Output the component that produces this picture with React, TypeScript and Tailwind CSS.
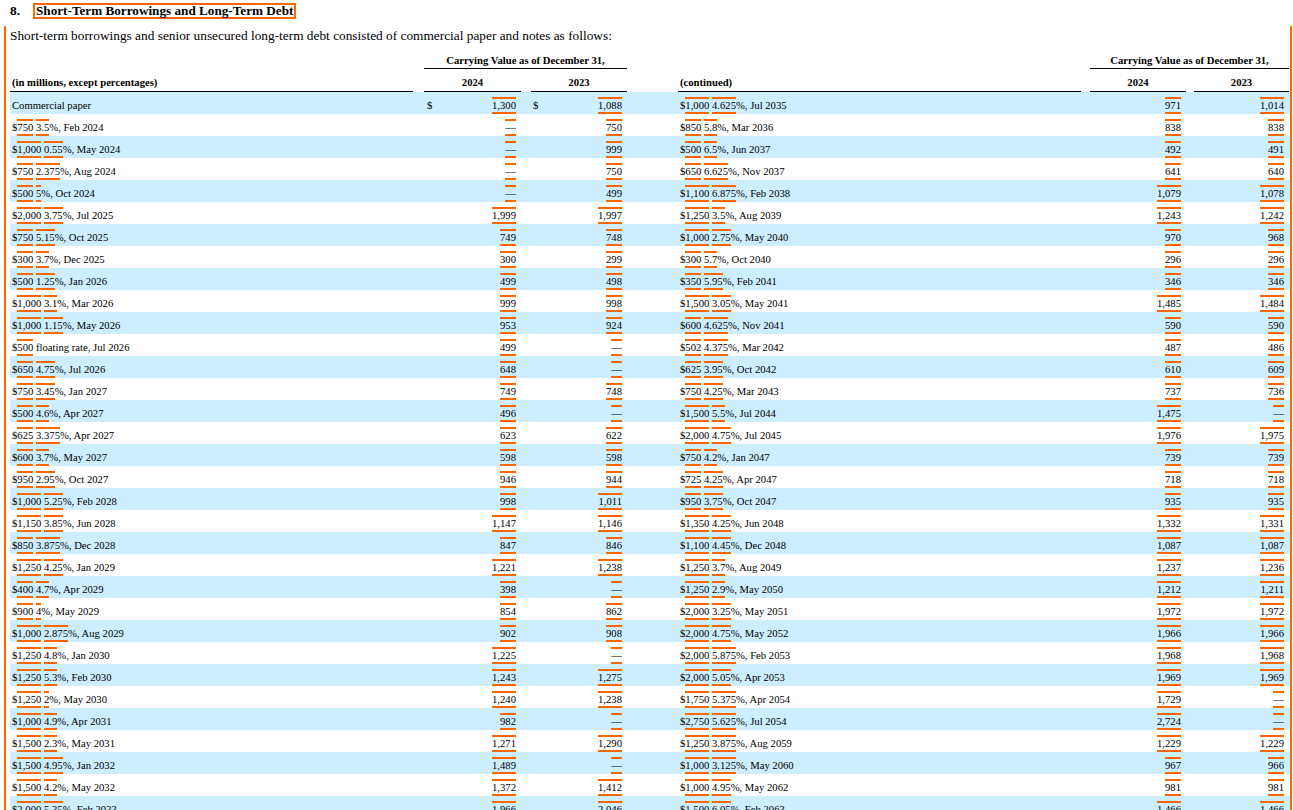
import React from "react";

const COLS =
  "grid grid-cols-[403px_11px_97px_10px_96px_51px_403px_9px_96px_8px_95px]";

const left: [string, string, string][] = [
  ["750|3.5|%, Feb 2024", "", "750"],
  ["1,000|0.55|%, May 2024", "", "999"],
  ["750|2.375|%, Aug 2024", "", "750"],
  ["500|5|%, Oct 2024", "", "499"],
  ["2,000|3.75|%, Jul 2025", "1,999", "1,997"],
  ["750|5.15|%, Oct 2025", "749", "748"],
  ["300|3.7|%, Dec 2025", "300", "299"],
  ["500|1.25|%, Jan 2026", "499", "498"],
  ["1,000|3.1|%, Mar 2026", "999", "998"],
  ["1,000|1.15|%, May 2026", "953", "924"],
  ["500||floating rate, Jul 2026", "499", ""],
  ["650|4.75|%, Jul 2026", "648", ""],
  ["750|3.45|%, Jan 2027", "749", "748"],
  ["500|4.6|%, Apr 2027", "496", ""],
  ["625|3.375|%, Apr 2027", "623", "622"],
  ["600|3.7|%, May 2027", "598", "598"],
  ["950|2.95|%, Oct 2027", "946", "944"],
  ["1,000|5.25|%, Feb 2028", "998", "1,011"],
  ["1,150|3.85|%, Jun 2028", "1,147", "1,146"],
  ["850|3.875|%, Dec 2028", "847", "846"],
  ["1,250|4.25|%, Jan 2029", "1,221", "1,238"],
  ["400|4.7|%, Apr 2029", "398", ""],
  ["900|4|%, May 2029", "854", "862"],
  ["1,000|2.875|%, Aug 2029", "902", "908"],
  ["1,250|4.8|%, Jan 2030", "1,225", ""],
  ["1,250|5.3|%, Feb 2030", "1,243", "1,275"],
  ["1,250|2|%, May 2030", "1,240", "1,238"],
  ["1,000|4.9|%, Apr 2031", "982", ""],
  ["1,500|2.3|%, May 2031", "1,271", "1,290"],
  ["1,500|4.95|%, Jan 2032", "1,489", ""],
  ["1,500|4.2|%, May 2032", "1,372", "1,412"],
  ["2,000|5.35|%, Feb 2033", "1,966", "2,046"],
];

const right: [string, string, string][] = [
  ["1,000|4.625|%, Jul 2035", "971", "1,014"],
  ["850|5.8|%, Mar 2036", "838", "838"],
  ["500|6.5|%, Jun 2037", "492", "491"],
  ["650|6.625|%, Nov 2037", "641", "640"],
  ["1,100|6.875|%, Feb 2038", "1,079", "1,078"],
  ["1,250|3.5|%, Aug 2039", "1,243", "1,242"],
  ["1,000|2.75|%, May 2040", "970", "968"],
  ["300|5.7|%, Oct 2040", "296", "296"],
  ["350|5.95|%, Feb 2041", "346", "346"],
  ["1,500|3.05|%, May 2041", "1,485", "1,484"],
  ["600|4.625|%, Nov 2041", "590", "590"],
  ["502|4.375|%, Mar 2042", "487", "486"],
  ["625|3.95|%, Oct 2042", "610", "609"],
  ["750|4.25|%, Mar 2043", "737", "736"],
  ["1,500|5.5|%, Jul 2044", "1,475", ""],
  ["2,000|4.75|%, Jul 2045", "1,976", "1,975"],
  ["750|4.2|%, Jan 2047", "739", "739"],
  ["725|4.25|%, Apr 2047", "718", "718"],
  ["950|3.75|%, Oct 2047", "935", "935"],
  ["1,350|4.25|%, Jun 2048", "1,332", "1,331"],
  ["1,100|4.45|%, Dec 2048", "1,087", "1,087"],
  ["1,250|3.7|%, Aug 2049", "1,237", "1,236"],
  ["1,250|2.9|%, May 2050", "1,212", "1,211"],
  ["2,000|3.25|%, May 2051", "1,972", "1,972"],
  ["2,000|4.75|%, May 2052", "1,966", "1,966"],
  ["2,000|5.875|%, Feb 2053", "1,968", "1,968"],
  ["2,000|5.05|%, Apr 2053", "1,969", "1,969"],
  ["1,750|5.375|%, Apr 2054", "1,729", ""],
  ["2,750|5.625|%, Jul 2054", "2,724", ""],
  ["1,250|3.875|%, Aug 2059", "1,229", "1,229"],
  ["1,000|3.125|%, May 2060", "967", "966"],
  ["1,000|4.95|%, May 2062", "981", "981"],
  ["1,500|6.05|%, Feb 2063", "1,466", "1,466"],
];

function Tag({ children }: { children: React.ReactNode }) {
  return (
    <span className="border-y-2 border-[#ff6600] pb-[1px]">{children}</span>
  );
}

function Label({ spec }: { spec: string }) {
  const [amt, rate, rest] = spec.split("|");
  return (
    <div className="pl-[2px] pt-[4px] leading-[18px] whitespace-nowrap">
      $<Tag>{amt}</Tag>{" "}
      {rate ? (
        <>
          <Tag>{rate}</Tag>
          {rest}
        </>
      ) : (
        rest
      )}
    </div>
  );
}

function Val({ v, dollar, pl }: { v: string; dollar?: boolean; pl?: string }) {
  return (
    <div
      className={`flex justify-between pr-[5px] pt-[4px] leading-[18px] ${
        pl ?? "pl-[3px]"
      }`}
    >
      <div>{dollar ? "$" : ""}</div>
      <div>
        <Tag>{v === "" ? "—" : v}</Tag>
      </div>
    </div>
  );
}

export default function App() {
  const rows = right.map((r, i) => ({ l: i === 0 ? null : left[i - 1], r }));
  return (
    <div className="w-[1293px] h-[810px] overflow-hidden bg-white text-black font-['Liberation_Serif',serif]">
      {/* Heading */}
      <div className="h-[26px] pl-[10px] pt-[3px] flex items-start">
        <div className="w-[23px] text-[13.3px] font-bold leading-[16px]">8.</div>
        <div className="h-[16px] border-2 border-[#ff6600] px-[1px] text-[13.2px] font-bold leading-[12px] whitespace-nowrap">
          Short-Term Borrowings and Long-Term Debt
        </div>
      </div>

      {/* Text block */}
      <div className="ml-[4px] w-[1288px] border-x-2 border-[#ff6600] pl-[4px] pt-[2px] pb-[40px]">
        <p className="text-[13.33px] leading-[16px] whitespace-nowrap">
          Short-term borrowings and senior unsecured long-term debt consisted of
          commercial paper and notes as follows:
        </p>

        <div className="text-[10.67px]">
          {/* Header row A */}
          <div className={`${COLS} h-[25px] font-bold`}>
            <div className="col-start-3 col-span-3 self-end border-b border-black text-center leading-[16px] whitespace-nowrap">
              Carrying Value as of December 31,
            </div>
            <div className="col-start-9 col-span-3 self-end border-b border-black text-center leading-[16px] whitespace-nowrap">
              Carrying Value as of December 31,
            </div>
          </div>
          {/* Header row B */}
          <div className={`${COLS} h-[23px] font-bold`}>
            <div className="border-b border-black pl-[2px] pt-[4px] leading-[18px] whitespace-nowrap">
              (in millions, except percentages)
            </div>
            <div />
            <div className="border-b border-black text-center pt-[4px] leading-[18px]">
              2024
            </div>
            <div />
            <div className="border-b border-black text-center pt-[4px] leading-[18px]">
              2023
            </div>
            <div />
            <div className="border-b border-black pl-[2px] pt-[4px] leading-[18px]">
              (continued)
            </div>
            <div />
            <div className="border-b border-black text-center pt-[4px] leading-[18px]">
              2024
            </div>
            <div />
            <div className="border-b border-black text-center pt-[4px] leading-[18px]">
              2023
            </div>
          </div>

          {/* Body */}
          {rows.map((row, i) => (
            <div
              key={i}
              className={`${COLS} h-[22px] ${i % 2 === 0 ? "bg-[#cceeff]" : ""}`}
            >
              {row.l === null ? (
                <>
                  <div className="pl-[2px] pt-[4px] leading-[18px]">
                    Commercial paper
                  </div>
                  <div />
                  <Val v="1,300" dollar />
                  <div />
                  <Val v="1,088" dollar pl="pl-[2px]" />
                </>
              ) : (
                <>
                  <Label spec={row.l[0]} />
                  <div />
                  <Val v={row.l[1]} />
                  <div />
                  <Val v={row.l[2]} />
                </>
              )}
              <div />
              <Label spec={row.r[0]} />
              <div />
              <Val v={row.r[1]} />
              <div />
              <Val v={row.r[2]} />
            </div>
          ))}
        </div>
      </div>
    </div>
  );
}
